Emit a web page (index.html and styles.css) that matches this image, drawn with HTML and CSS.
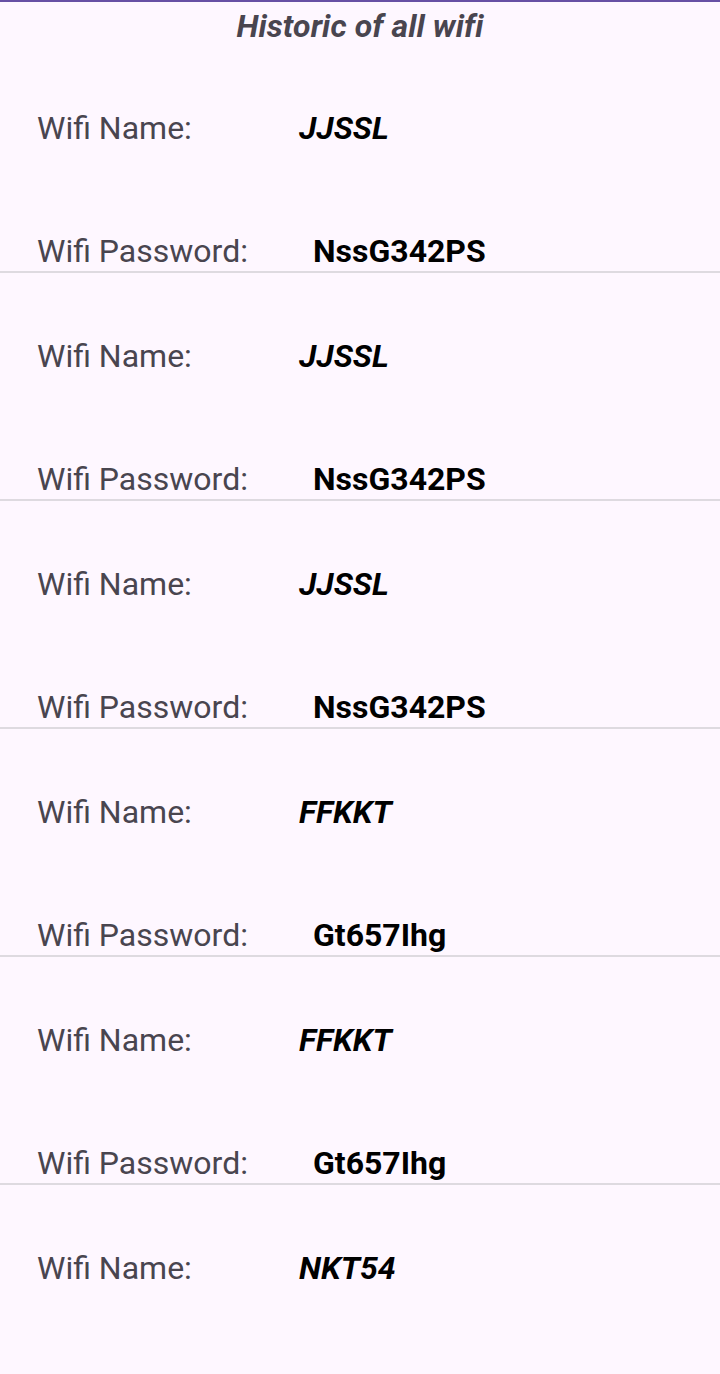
FILE: index.html
```html
<!DOCTYPE html>
<html lang="en">
<head>
<meta charset="utf-8">
<title>Historic of all wifi</title>
<link rel="stylesheet" href="styles.css">
</head>
<body>
<header class="header"><h1 class="title">Historic of all wifi</h1></header>
<main class="list">
  <section class="row">
    <div class="line"><span class="label name-label">Wifi Name:</span><span class="name">JJSSL</span></div>
    <div class="line pw"><span class="label pw-label">Wifi Password:</span><span class="password">NssG342PS</span></div>
  </section>
  <section class="row">
    <div class="line"><span class="label name-label">Wifi Name:</span><span class="name">JJSSL</span></div>
    <div class="line pw"><span class="label pw-label">Wifi Password:</span><span class="password">NssG342PS</span></div>
  </section>
  <section class="row">
    <div class="line"><span class="label name-label">Wifi Name:</span><span class="name">JJSSL</span></div>
    <div class="line pw"><span class="label pw-label">Wifi Password:</span><span class="password">NssG342PS</span></div>
  </section>
  <section class="row">
    <div class="line"><span class="label name-label">Wifi Name:</span><span class="name">FFKKT</span></div>
    <div class="line pw"><span class="label pw-label">Wifi Password:</span><span class="password">Gt657Ihg</span></div>
  </section>
  <section class="row">
    <div class="line"><span class="label name-label">Wifi Name:</span><span class="name">FFKKT</span></div>
    <div class="line pw"><span class="label pw-label">Wifi Password:</span><span class="password">Gt657Ihg</span></div>
  </section>
  <section class="row">
    <div class="line"><span class="label name-label">Wifi Name:</span><span class="name">NKT54</span></div>
  </section>
</main>
</body>
</html>
```
FILE: styles.css
```css
html, body {
  margin: 0;
  padding: 0;
}
body {
  background: #fef7ff;
  font-family: Roboto, "Noto Sans", sans-serif;
  height: 1374px;
  overflow: hidden;
}
.header {
  border-top: 2px solid #6750a4;
  height: 43px;
  box-sizing: content-box;
}
.title {
  margin: 0;
  padding-top: 6px;
  font-size: 32px;
  line-height: 37px;
  font-weight: 700;
  font-style: italic;
  color: #49454f;
  text-align: center;
  letter-spacing: 0.1px;
}
.row {
  border-bottom: 2px solid #dedae0;
  padding-top: 64px;
  box-sizing: content-box;
  height: 162px;
}
.line {
  display: flex;
  align-items: baseline;
  padding-left: 37px;
  font-size: 32px;
  line-height: 38px;
  height: 38px;
}
.line.pw {
  margin-top: 85px;
}
.label {
  color: #49454f;
  font-weight: 400;
}
.name-label { width: 262px; flex: none; }
.pw-label { width: 276px; flex: none; }
.name {
  font-weight: 700;
  font-style: italic;
  color: #000;
}
.password {
  font-weight: 700;
  color: #000;
}
```
